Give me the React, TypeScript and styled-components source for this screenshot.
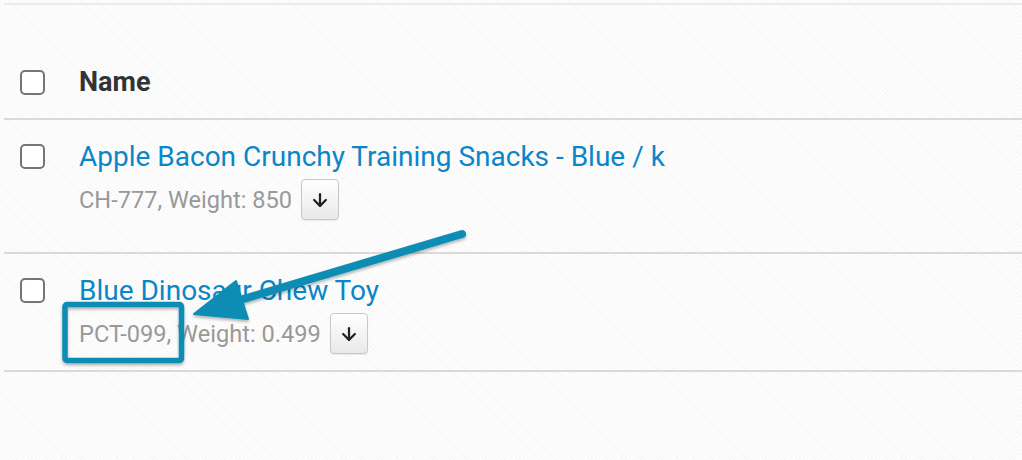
import React from "react";
import styled, { createGlobalStyle } from "styled-components";
import { ArrowDown } from "lucide-react";

const GlobalStyle = createGlobalStyle`
  html, body {
    margin: 0;
    padding: 0;
    background-color: #fbfbfb;
    background-image: repeating-linear-gradient(
      45deg,
      #f7f7f7 0px,
      #f7f7f7 1px,
      #fdfdfd 1px,
      #fdfdfd 3px
    );
    font-family: Roboto, "Liberation Sans", Arial, sans-serif;
  }
`;

const Page = styled.div`
  position: relative;
  width: 1022px;
  height: 460px;
  overflow: hidden;
  padding-top: 3px;
  box-sizing: border-box;
`;

const Table = styled.div`
  margin-left: 4px;
  border-top: 2px solid #ececec;
  border-bottom: 2px solid #dadada;
`;

const HeaderRow = styled.div`
  display: flex;
  align-items: center;
  gap: 34px;
  padding: 65px 16px 23px;
  border-bottom: 2px solid #dadada;
`;

const Row = styled.div<{ bottom: number; last?: boolean }>`
  display: flex;
  align-items: flex-start;
  gap: 34px;
  padding: 24px 16px ${(p) => p.bottom}px;
  border-bottom: ${(p) => (p.last ? "none" : "2px solid #dadada")};
`;

const Checkbox = styled.span`
  flex: none;
  width: 25px;
  height: 25px;
  box-sizing: border-box;
  border: 2px solid #757575;
  border-radius: 5px;
  background: #fff;
`;

const HeaderLabel = styled.span`
  font-size: 27px;
  font-weight: 700;
  color: #333;
  line-height: 25px;
`;

const Cell = styled.div`
  display: flex;
  flex-direction: column;
  margin-top: -4px;
`;

const Title = styled.a`
  font-size: 28px;
  line-height: 34px;
  color: #0a86c8;
  text-decoration: none;
`;

const Meta = styled.div`
  display: flex;
  align-items: center;
  gap: 9px;
  margin-top: 5px;
`;

const MetaText = styled.span`
  font-size: 23.6px;
  color: #999;
  line-height: 26px;
`;

const IconButton = styled.button`
  width: 38px;
  height: 41px;
  display: flex;
  align-items: center;
  justify-content: center;
  padding: 0;
  border: 1px solid #c8c8c8;
  border-radius: 4px;
  background: linear-gradient(#ffffff, #e9e9e9);
  box-shadow: 0 1px 1px rgba(0, 0, 0, 0.08);
  color: #222;
`;

const Overlay = styled.svg`
  position: absolute;
  left: 0;
  top: 0;
  pointer-events: none;
`;

const items = [
  { name: "Apple Bacon Crunchy Training Snacks - Blue / k", meta: "CH-777, Weight: 850", bottom: 32 },
  { name: "Blue Dinosaur Chew Toy", meta: "PCT-099, Weight: 0.499", bottom: 16 },
];

const App: React.FC = () => {
  return (
    <Page>
      <GlobalStyle />
      <Table>
        <HeaderRow>
          <Checkbox />
          <HeaderLabel>Name</HeaderLabel>
        </HeaderRow>
        {items.map((item, i) => (
          <Row key={item.meta} bottom={item.bottom} last={i === items.length - 1}>
            <Checkbox />
            <Cell>
              <Title href="#">{item.name}</Title>
              <Meta>
                <MetaText>{item.meta}</MetaText>
                <IconButton>
                  <ArrowDown size={20} strokeWidth={2.7} />
                </IconButton>
              </Meta>
            </Cell>
          </Row>
        ))}
      </Table>
      <Overlay width="1022" height="460" viewBox="0 0 1022 460">
        <defs>
          <filter id="sh" x="-20%" y="-20%" width="140%" height="140%">
            <feDropShadow dx="0" dy="2" stdDeviation="1.5" floodColor="#000" floodOpacity="0.3" />
          </filter>
        </defs>
        <g filter="url(#sh)" fill="#0b8db4" stroke="#0b8db4">
          <rect x="65" y="304.5" width="116.5" height="56" rx="2" fill="none" strokeWidth="5.5" />
          <line x1="240" y1="300" x2="462" y2="234" strokeWidth="8" strokeLinecap="round" />
          <polygon points="194,314 236,281 248,319" strokeWidth="2" strokeLinejoin="round" />
        </g>
      </Overlay>
    </Page>
  );
};

export default App;
